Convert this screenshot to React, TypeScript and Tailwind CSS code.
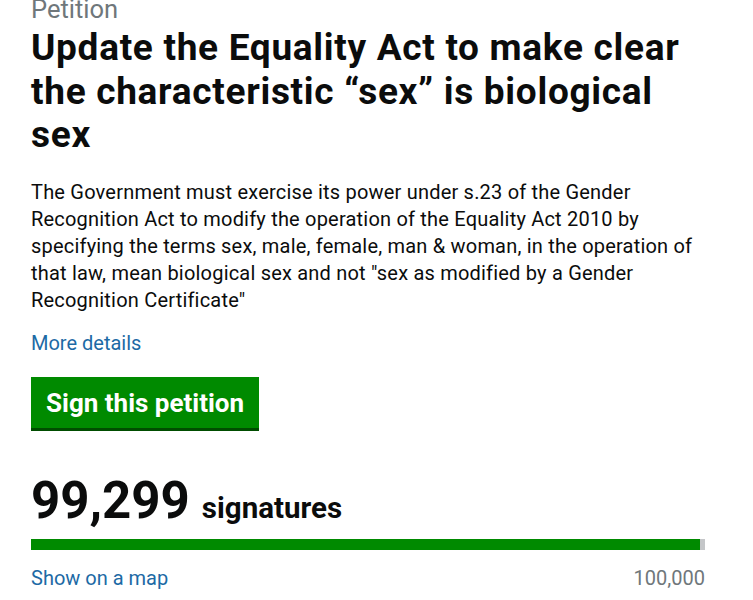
export default function App() {
  return (
    <div className="min-h-screen bg-white font-['Roboto',sans-serif] text-[#0b0c0c]">
      <div className="w-[674px] ml-[31px] -mt-[7px]">
        <p className="text-[25.5px] leading-[32px] text-[#6f777b]">Petition</p>
        <h1 className="mt-[1px] text-[37px] font-bold leading-[43.5px] tracking-[0.7px]">
          Update the Equality Act to make clear the characteristic “sex” is biological sex
        </h1>
        <p className="mt-[22.5px] text-[20px] leading-[27px] tracking-[0.2px]">
          The Government must exercise its power under s.23 of the Gender Recognition Act to modify the
          operation of the Equality Act 2010 by specifying the terms sex, male, female, man &amp; woman, in
          the operation of that law, mean biological sex and not "sex as modified by a Gender Recognition
          Certificate"
        </p>
        <a href="#" className="mt-[16px] block text-[20px] leading-[27px] text-[#1d6aa5]">
          More details
        </a>
        <button
          type="button"
          className="mt-[20px] block h-[51px] bg-[#008a00] px-[15px] text-[26px] font-bold leading-[32px] text-white shadow-[0_3px_0_#004d00]"
        >
          Sign this petition
        </button>
        <div className="mt-[45px] flex items-baseline gap-[12px]">
          <span className="text-[51px] font-bold leading-[56px]">99,299</span>
          <span className="text-[29.5px] font-bold">signatures</span>
        </div>
        <div className="mt-[9px] flex h-[11px] bg-[#c4c6c8]">
          <div className="h-full bg-[#008a00]" style={{ width: '99.3%' }} />
        </div>
        <div className="mt-[14.7px] flex justify-between text-[20px] leading-[27px]">
          <a href="#" className="text-[#1d6aa5]">
            Show on a map
          </a>
          <span className="text-[#6f777b]">100,000</span>
        </div>
      </div>
    </div>
  )
}
